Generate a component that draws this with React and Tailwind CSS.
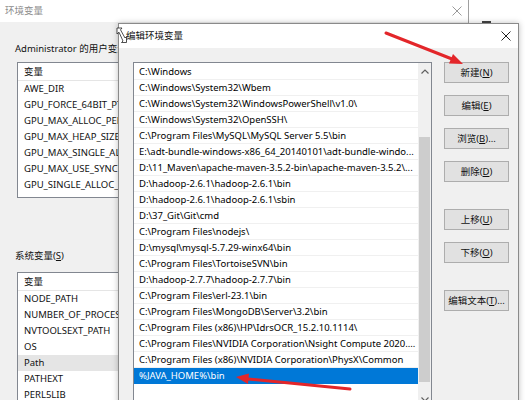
import React from "react";

const paths = [
  "C:\\Windows",
  "C:\\Windows\\System32\\Wbem",
  "C:\\Windows\\System32\\WindowsPowerShell\\v1.0\\",
  "C:\\Windows\\System32\\OpenSSH\\",
  "C:\\Program Files\\MySQL\\MySQL Server 5.5\\bin",
  "E:\\adt-bundle-windows-x86_64_20140101\\adt-bundle-windo...",
  "D:\\11_Maven\\apache-maven-3.5.2-bin\\apache-maven-3.5.2\\...",
  "D:\\hadoop-2.6.1\\hadoop-2.6.1\\bin",
  "D:\\hadoop-2.6.1\\hadoop-2.6.1\\sbin",
  "D:\\37_Git\\Git\\cmd",
  "C:\\Program Files\\nodejs\\",
  "D:\\mysql\\mysql-5.7.29-winx64\\bin",
  "C:\\Program Files\\TortoiseSVN\\bin",
  "D:\\hadoop-2.7.7\\hadoop-2.7.7\\bin",
  "C:\\Program Files\\erl-23.1\\bin",
  "C:\\Program Files\\MongoDB\\Server\\3.2\\bin",
  "C:\\Program Files (x86)\\HP\\IdrsOCR_15.2.10.1114\\",
  "C:\\Program Files\\NVIDIA Corporation\\Nsight Compute 2020....",
  "C:\\Program Files (x86)\\NVIDIA Corporation\\PhysX\\Common",
];

const userVars = [
  "AWE_DIR",
  "GPU_FORCE_64BIT_PT",
  "GPU_MAX_ALLOC_PER",
  "GPU_MAX_HEAP_SIZE",
  "GPU_MAX_SINGLE_AL",
  "GPU_MAX_USE_SYNC",
  "GPU_SINGLE_ALLOC_",
];

const sysVars = [
  "NODE_PATH",
  "NUMBER_OF_PROCES",
  "NVTOOLSEXT_PATH",
  "OS",
  "Path",
  "PATHEXT",
  "PERL5LIB",
];

function Btn({ label, m, suffix = "" }) {
  return (
    <div className="h-[21px] w-[65px] border border-[#adadad] bg-[#e1e1e1] flex items-center justify-center text-[#111]">
      <span>
        {label}(<span className="underline">{m}</span>){suffix}
      </span>
    </div>
  );
}

function CloseX({ color }) {
  return (
    <svg width="10" height="10" viewBox="0 0 10 10">
      <path d="M0.5 0.5 L9.5 9.5 M9.5 0.5 L0.5 9.5" stroke={color} strokeWidth="1" fill="none" />
    </svg>
  );
}

export default function App() {
  return (
    <div className="relative w-[525px] h-[400px] overflow-hidden bg-white font-['Noto_Sans','Noto_Sans_CJK_SC',sans-serif] text-[9.5px] leading-none">
      {/* stray window piece at right */}
      <div className="absolute left-[482px] top-[21px] w-[9px] h-[3px] bg-[#444]" />

      {/* Background window: 环境变量 */}
      <div className="absolute left-0 top-0 w-[469px] h-[420px] bg-[#f0f0f0] border-r border-[#a0a0a0] flex flex-col">
        <div className="h-[22px] bg-white flex items-center justify-between pl-[5px] pr-[6px] shrink-0">
          <span className="text-[#8c8c8c]">环境变量</span>
          <CloseX color="#9a9a9a" />
        </div>
        <div className="flex flex-col pl-[15px]">
          <div className="h-[16px] mt-[19px] flex items-center text-[#111]">Administrator 的用户变量(U)</div>
          <div className="mt-[5px] ml-[2px] w-[440px] h-[136px] bg-white border border-[#828790] flex flex-col overflow-hidden">
            <div className="h-[18px] flex items-center pl-[6px] border-b border-[#e5e5e5] text-[#111] shrink-0">变量</div>
            {userVars.map((v) => (
              <div key={v} className="h-[16px] flex items-center pl-[6px] whitespace-nowrap text-[#111] shrink-0">
                {v}
              </div>
            ))}
          </div>
          <div className="h-[16px] mt-[50px] flex items-center text-[#111]">
            <span>
              系统变量(<span className="underline">S</span>)
            </span>
          </div>
          <div className="mt-[8px] ml-[2px] w-[440px] h-[140px] bg-white border border-[#828790] flex flex-col overflow-hidden">
            <div className="h-[18px] flex items-center pl-[6px] border-b border-[#e5e5e5] text-[#111] shrink-0">变量</div>
            {sysVars.map((v) => (
              <div
                key={v}
                className={`h-[16px] flex items-center pl-[6px] whitespace-nowrap text-[#111] shrink-0 ${v === "Path" ? "bg-[#e5e5e5]" : ""}`}
              >
                {v}
              </div>
            ))}
          </div>
        </div>
      </div>

      {/* Front dialog: 编辑环境变量 */}
      <div className="absolute left-[118px] top-[23px] w-[401px] h-[400px] bg-[#f0f0f0] border border-[#8a8a8a] shadow-[0_0_6px_rgba(0,0,0,0.25)] flex flex-col">
        <div className="h-[24px] bg-white flex items-center justify-between pl-[7px] pr-[7px] shrink-0">
          <span className="text-[#111]">编辑环境变量</span>
          <CloseX color="#222" />
        </div>
        <div className="flex pt-[14px] pl-[14px]">
          <div className="w-[299px] h-[345px] bg-white border border-[#828790] flex">
            <div className="flex-1 flex flex-col pt-[1px] overflow-hidden">
              {paths.map((p, i) => (
                <div
                  key={i}
                  className="h-[16px] flex items-center pl-[5px] whitespace-nowrap text-black border-b border-[#f0f0f0] shrink-0"
                >
                  {p}
                </div>
              ))}
              <div className="h-[16px] flex items-center pl-[5px] whitespace-nowrap text-white bg-[#0078d7] shrink-0">
                %JAVA_HOME%\bin
              </div>
            </div>
            <div className="w-[13px] bg-[#f0f0f0] flex flex-col items-center shrink-0">
              <div className="h-[17px] flex items-center justify-center shrink-0">
                <svg width="8" height="5" viewBox="0 0 8 5">
                  <path d="M0.5 4.5 L4 1 L7.5 4.5" stroke="#606060" strokeWidth="1.2" fill="none" />
                </svg>
              </div>
              <div className="h-[57px] shrink-0" />
              <div className="w-[11px] h-[245px] bg-[#cdcdcd] shrink-0" />
              <div className="flex-1" />
              <div className="h-[14px] flex items-center justify-center shrink-0">
                <svg width="8" height="5" viewBox="0 0 8 5">
                  <path d="M0.5 0.5 L4 4 L7.5 0.5" stroke="#606060" strokeWidth="1.2" fill="none" />
                </svg>
              </div>
            </div>
          </div>
          <div className="ml-[12px] flex flex-col">
            <Btn label="新建" m="N" />
            <div className="mt-[12px]"><Btn label="编辑" m="E" /></div>
            <div className="mt-[12px]"><Btn label="浏览" m="B" suffix="..." /></div>
            <div className="mt-[12px]"><Btn label="删除" m="D" /></div>
            <div className="mt-[27px]"><Btn label="上移" m="U" /></div>
            <div className="mt-[12px]"><Btn label="下移" m="O" /></div>
            <div className="mt-[27px]"><Btn label="编辑文本" m="T" suffix="..." /></div>
          </div>
        </div>
      </div>

      {/* resize cursor */}
      <svg className="absolute left-[116px] top-[27px]" width="12" height="17" viewBox="0 0 12 17">
        <path d="M1 1 L6 1 L4.5 2.8 L9 11 L10.5 9.5 L10.5 15.5 L5.5 15.5 L7 14 L3 5.2 L1 7 Z" fill="white" stroke="#222" strokeWidth="0.8" />
      </svg>

      {/* red arrows */}
      <svg className="absolute left-0 top-0 pointer-events-none" width="525" height="400" viewBox="0 0 525 400">
        <line x1="386" y1="33" x2="452" y2="59" stroke="#e3262a" strokeWidth="3" strokeLinecap="round" />
        <path d="M463 64 L449 63.5 L453 54 Z" fill="#e3262a" />
        <line x1="350" y1="389" x2="248" y2="379" stroke="#e3262a" strokeWidth="3" strokeLinecap="round" />
        <path d="M236 377 L249 373.5 L248 384 Z" fill="#e3262a" />
      </svg>
    </div>
  );
}
